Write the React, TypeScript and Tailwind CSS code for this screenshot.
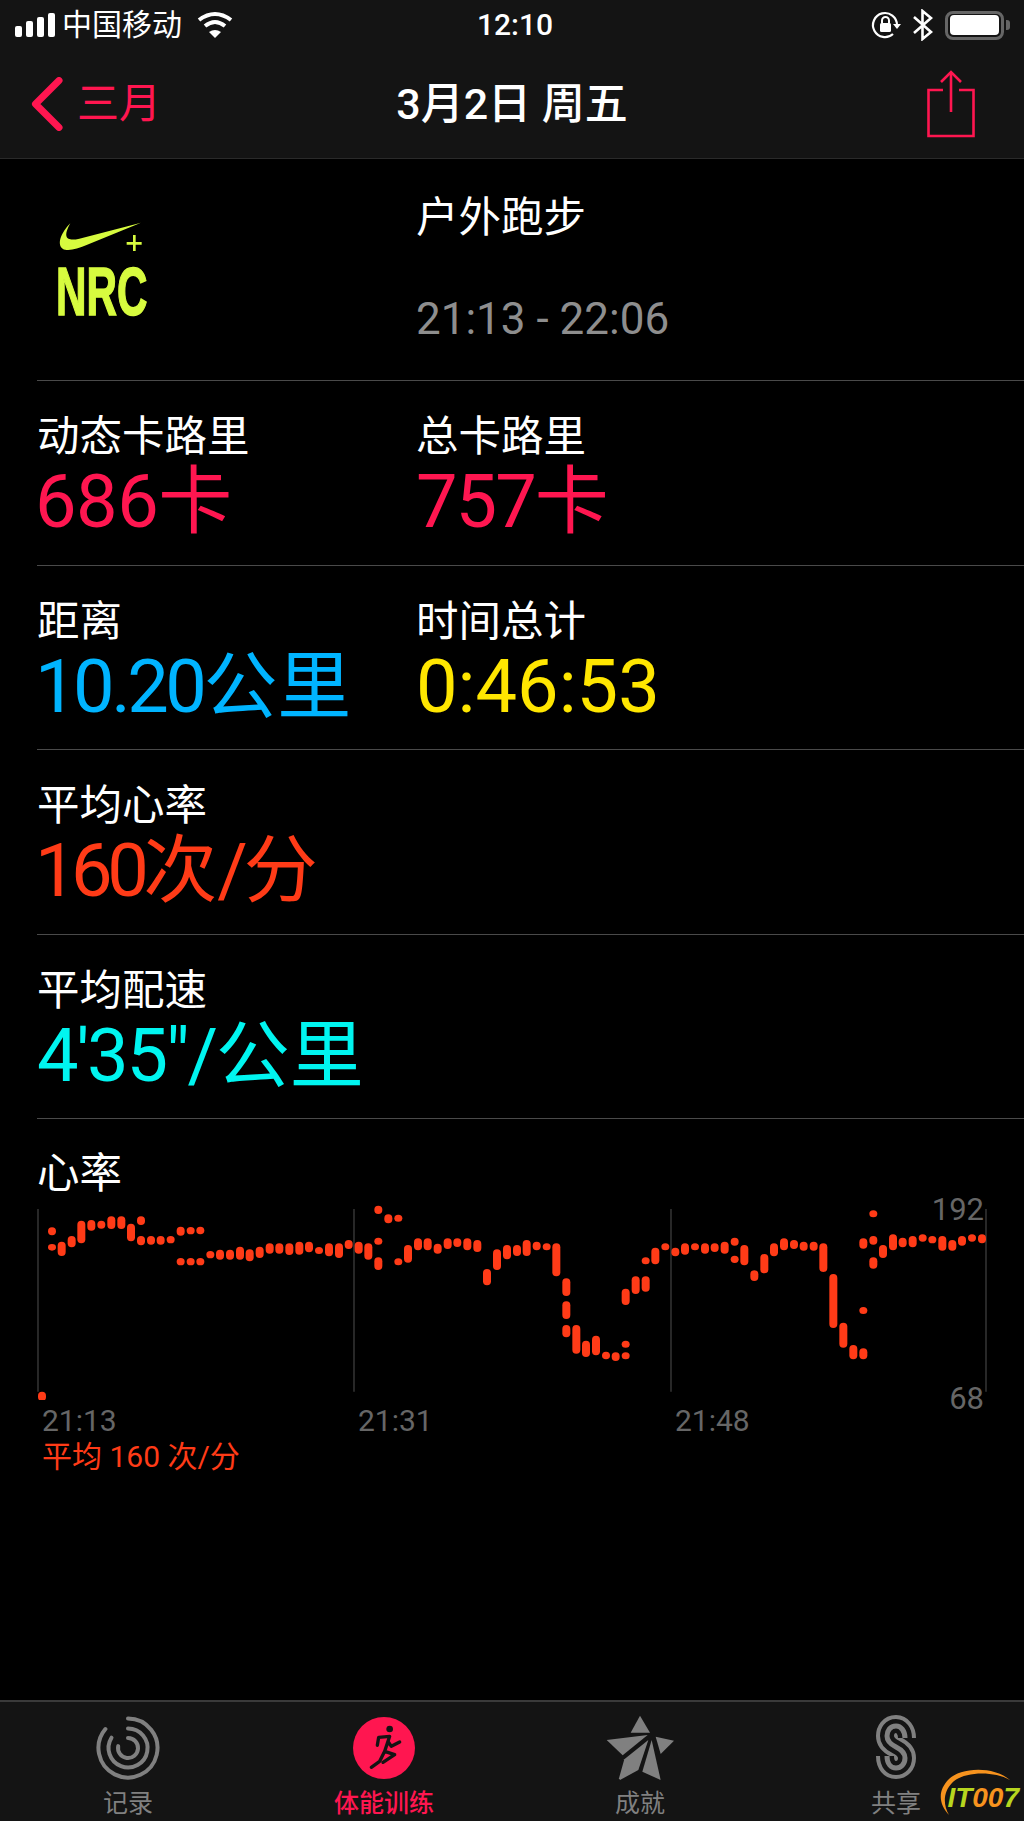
import React from 'react';

// pills of the heart-rate chart as [x, top, bottom], in 3x chart units
const first: number[][] = [
    [66, 605, 633], [96, 112, 136], [96, 162, 182], [125, 155, 198], [155, 138, 172], [184, 92, 160], [214, 90, 122],
    [244, 92, 116], [274, 79, 117], [304, 79, 117], [333, 101, 154], [363, 79, 105], [363, 138, 166], [393, 138, 164],
    [422, 138, 164], [452, 138, 160], [482, 110, 137], [482, 204, 226], [512, 111, 133], [512, 204, 226], [541, 110, 133],
    [541, 204, 226], [571, 183, 205], [600, 179, 209], [630, 179, 209], [660, 170, 209], [689, 178, 214], [719, 170, 204],
    [749, 160, 191], [778, 160, 191], [808, 160, 195], [838, 155, 194], [867, 155, 187], [897, 171, 192], [927, 160, 199],
    [957, 160, 204], [986, 150, 177], [1016, 155, 191],
];
const second: number[][] = [
    [85, 160, 209], [115, 47, 72], [115, 143, 164], [115, 202, 240], [145, 73, 100], [175, 74, 95], [175, 205, 226],
    [204, 165, 218], [234, 145, 181], [263, 145, 181], [293, 161, 191], [323, 145, 177], [352, 145, 171], [382, 145, 181],
    [412, 150, 186], [441, 237, 286], [471, 178, 240], [501, 165, 208], [531, 165, 198], [560, 150, 198], [590, 155, 181],
    [620, 160, 181], [649, 160, 259], [679, 265, 318], [679, 334, 387], [679, 405, 442], [709, 405, 491], [738, 452, 501],
    [768, 437, 496], [798, 485, 508], [827, 487, 513], [857, 296, 345], [857, 452, 473], [857, 487, 508], [887, 259, 312],
    [917, 202, 223], [917, 259, 305], [946, 173, 223], [976, 160, 181], [1006, 173, 199],
];
const third: number[][] = [
    [75, 160, 194], [105, 160, 181], [135, 160, 191], [164, 160, 186], [194, 155, 191], [224, 143, 167], [224, 197, 219],
    [253, 165, 226], [283, 241, 273], [313, 192, 250], [342, 160, 199], [372, 145, 181], [402, 150, 177], [431, 155, 182],
    [461, 155, 182], [490, 160, 246], [520, 252, 414], [550, 398, 473], [580, 465, 508], [610, 145, 176], [610, 351, 372],
    [610, 475, 508], [640, 61, 82], [640, 138, 164], [640, 202, 236], [669, 165, 204], [699, 133, 181], [728, 143, 172],
    [758, 138, 172], [788, 133, 155], [817, 138, 160], [847, 138, 182], [877, 150, 182], [906, 138, 167], [936, 133, 155],
    [966, 133, 160],
];
const pills = [
    ...first,
    ...second.map(([x, a, b]) => [x + 960, a, b]),
    ...third.map(([x, a, b]) => [x + 1920, a, b]),
];

const sCurve =
    'M905 1737 C905 1730 901 1725 896 1725 C890 1725 887 1730 887 1735 C887 1741 892 1744 896 1746 C900 1748 905 1751 905 1757 C905 1763 901 1767 896 1767 C891 1767 887 1763 887 1755';

function StatusBar() {
    return (
        <div className="flex h-[50px] items-center text-white">
            <div className="flex w-[477px] items-center pl-[15px]">
                <div className="flex h-[24px] items-end gap-[4px]">
                    <div className="h-[11px] w-[7px] rounded-[2px] bg-white" />
                    <div className="h-[16px] w-[7px] rounded-[2px] bg-white" />
                    <div className="h-[20px] w-[7px] rounded-[2px] bg-white" />
                    <div className="h-[24px] w-[7px] rounded-[2px] bg-white" />
                </div>
                <span className="ml-[7px] text-[30px] leading-[50px]">中国移动</span>
                <svg className="ml-[14px]" width="38" height="28" viewBox="0 0 36 28" fill="none" stroke="white" strokeWidth="4">
                    <path d="M2 9 Q18 -3 34 9" />
                    <path d="M8 15 Q18 7 28 15" />
                    <path d="M12 21 Q18 17 24 21 L18 27 Z" fill="white" stroke="none" />
                </svg>
            </div>
            <span className="w-[80px] text-[30px] font-medium leading-[50px]">12:10</span>
            <div className="flex flex-1 items-center pl-[313px]">
                <svg width="32" height="30" viewBox="0 0 32 30" fill="none">
                    <path d="M27 15 A12 12 0 1 0 23 24" stroke="white" strokeWidth="2.2" />
                    <path d="M23 14 H31 L27 19 Z" fill="white" />
                    <rect x="10" y="13" width="11" height="9" rx="1.5" fill="white" />
                    <path d="M12 13 V10.5 A3.5 3.5 0 0 1 19 10.5 V13" stroke="white" strokeWidth="2" />
                </svg>
                <svg className="ml-[10px]" width="22" height="32" viewBox="0 0 22 32" fill="none" stroke="white" strokeWidth="2.6">
                    <path d="M2 8 L19 23 L10.5 30 V2 L19 9 L2 24" />
                </svg>
                <div className="ml-[11px] flex items-center">
                    <div className="flex h-[29px] w-[59px] items-center justify-center rounded-[8px] border-[3px] border-[#666666]">
                        <div className="h-[20px] w-[49px] rounded-[4px] bg-white" />
                    </div>
                    <div className="ml-[2px] h-[10px] w-[4px] rounded-r-[3px] bg-[#666666]" />
                </div>
            </div>
        </div>
    );
}

function NavBar() {
    return (
        <div className="flex h-[109px] items-center border-b border-[#2a2a2a] pb-[1px]">
            <div className="flex w-[200px] items-center pl-[31px] text-[#ff1650]">
                <svg width="32" height="54" viewBox="0 0 32 54" fill="none" stroke="#ff1650" strokeWidth="7" strokeLinecap="round" strokeLinejoin="round">
                    <path d="M28 3.5 L4.5 27 L28 50.5" />
                </svg>
                <span className="ml-[14px] text-[42px] leading-[50px]">三月</span>
            </div>
            <div className="flex-1 text-center text-[43px] font-medium leading-[50px] text-white">3月2日 周五</div>
            <div className="flex w-[200px] justify-end pr-[49px]">
                <svg width="48" height="68" viewBox="0 0 48 68" fill="none" stroke="#ff1650" strokeWidth="2.6">
                    <path d="M16 20 H1.5 V66 H46.5 V20 H32" />
                    <path d="M24 2 V42" />
                    <path d="M14 12 L24 2 L34 12" />
                </svg>
            </div>
        </div>
    );
}

function Stat({ label, children, color }: { label: string; children: React.ReactNode; color: string }) {
    return (
        <div className="w-[379px]">
            <div className="text-[42.5px] leading-[50px] text-white">{label}</div>
            <div className={`mt-[2px] whitespace-nowrap text-[74px] leading-[76px] ${color}`}>{children}</div>
        </div>
    );
}

function StatRow({ children }: { children: React.ReactNode }) {
    return <div className="ml-[37px] flex h-[184.5px] border-b border-[#4a4a4a] pt-[31px]">{children}</div>;
}

function Header() {
    return (
        <div className="ml-[37px] flex h-[222px] border-b border-[#4a4a4a]">
            <div className="w-[379px] pl-[19px] pt-[62px]">
                <svg width="90" height="34" viewBox="110 155 270 102">
                    <path d="M153 162 C125 190 112 225 130 238 C145 248 175 238 200 228 L365 160 L180 208 C150 215 125 212 153 162 Z" fill="#d7fb3f" />
                    <path d="M345 197 V245 M322 222 H367" stroke="#d7fb3f" strokeWidth="8" />
                </svg>
                <div className="mt-[13px] h-[47px] origin-left scale-x-[0.62] font-['Liberation_Sans',sans-serif] text-[68px] font-bold leading-[47px] text-[#d7fb3f] [-webkit-text-stroke:1.5px_#d7fb3f]">NRC</div>
            </div>
            <div className="pt-[34px]">
                <div className="text-[42.5px] leading-[50px] text-white">户外跑步</div>
                <div className="mt-[51px] text-[44px] leading-[50px] text-[#8e8e8e]">21:13 - 22:06</div>
            </div>
        </div>
    );
}

function HeartChart() {
    return (
        <div className="ml-[37px] pt-[30px]">
            <div className="text-[42.5px] leading-[50px] text-white">心率</div>
            <div className="relative -ml-[17px] mt-[1px] h-[200px] w-[990px]">
                <svg width="990" height="200" viewBox="0 30 2970 600">
                    {[54, 1002, 1953, 2898].map((x) => (
                        <line key={x} x1={x} x2={x} y1="57" y2="605" stroke="#3c3c3c" strokeWidth="4" />
                    ))}
                    {pills.map(([x, a, b], i) => (
                        <rect key={i} x={x - 12} y={a} width="24" height={b - a} rx="12" fill="#ff3b17" />
                    ))}
                </svg>
                <span className="absolute right-[26px] top-[-8px] text-[31px] leading-[36px] text-[#666666]">192</span>
                <span className="absolute right-[26px] top-[181px] text-[31px] leading-[36px] text-[#666666]">68</span>
            </div>
            <div className="mt-[3px] flex pl-[5px] text-[30px] leading-[36px] text-[#666666]">
                <span className="w-[316px]">21:13</span>
                <span className="w-[317px]">21:31</span>
                <span>21:48</span>
            </div>
            <div className="pl-[5px] text-[30px] leading-[35px] text-[#ff3b17]">平均 160 次/分</div>
        </div>
    );
}

function TabBar() {
    return (
        <div className="relative grid h-[121px] grid-cols-4 border-t-2 border-[#3a3a3a] bg-[#141414] pt-[13px]">
            <div className="flex flex-col items-center text-[#808080]">
                <svg width="66" height="66" viewBox="-33 -33 66 66" fill="none" stroke="#808080" strokeWidth="4" strokeLinecap="round">
                    <path d="M0 -29.5 A29.5 29.5 0 1 1 -22.6 -19" />
                    <path d="M0 -19.5 A19.5 19.5 0 1 1 -16.5 -10.3" />
                    <path d="M0 -10 A10 10 0 1 1 -9.8 -1.9" />
                </svg>
                <span className="mt-[7px] text-[25px] leading-[32px]">记录</span>
            </div>
            <div className="flex flex-col items-center text-[#ff1650]">
                <svg width="66" height="66" viewBox="1054 71 198 198" fill="none">
                    <circle cx="1153" cy="170" r="93" fill="#ff1650" />
                    <circle cx="1170" cy="113" r="10" fill="#141414" />
                    <path d="M1133 162 L1137 138 L1170 135 L1155 180 L1185 190 L1150 213 M1155 180 L1140 210 L1115 228 M1165 150 L1175 165 L1200 152" stroke="#141414" strokeWidth="10" strokeLinecap="round" strokeLinejoin="round" />
                </svg>
                <span className="mt-[7px] text-[25px] font-medium leading-[32px]">体能训练</span>
            </div>
            <div className="flex flex-col items-center text-[#808080]">
                <svg className="overflow-visible" width="66" height="66" viewBox="286 75 198 198" fill="#808080">
                    <polygon points="385,77 415,128 357,128" />
                    <polygon points="285,150 408,135 333,196" />
                    <polygon points="410,150 380,240 325,270 322,265 338,208" />
                    <polygon points="420,150 447,270 392,245" />
                    <polygon points="432,140 487,152 447,192" />
                </svg>
                <span className="mt-[7px] text-[25px] leading-[32px]">成就</span>
            </div>
            <div className="flex flex-col items-center text-[#808080]">
                <svg width="66" height="66" viewBox="863 1714 66 66" fill="none">
                    <path d={sCurve} stroke="#808080" strokeWidth="22" />
                    <path d={sCurve} stroke="#141414" strokeWidth="14" />
                    <path d={sCurve} stroke="#808080" strokeWidth="5" />
                </svg>
                <span className="mt-[7px] text-[25px] leading-[32px]">共享</span>
            </div>
            {/* watermark */}
            <svg className="absolute bottom-0 right-0" width="90" height="60" viewBox="934 1761 90 60">
                <path d="M949 1815 C938 1803 938 1790 949 1779 C960 1768 992 1765 1010 1780 C992 1770 962 1772 952 1783 C943 1792 943 1805 949 1815 Z" fill="#f7931e" />
            </svg>
            <div className="absolute bottom-[7px] right-[5px] font-['Liberation_Sans',sans-serif] text-[28px] font-bold italic leading-[32px] text-[#b7d61f]">
                IT<span className="text-[#f7931e]">00</span>7
            </div>
        </div>
    );
}

export default function App() {
    return (
        <div className="flex h-[1821px] w-[1024px] flex-col overflow-hidden bg-black font-['Roboto','Noto_Sans_CJK_SC',sans-serif]">
            <div className="bg-[#141414]">
                <StatusBar />
                <NavBar />
            </div>
            <main className="flex-1">
                <Header />
                <StatRow>
                    <Stat label="动态卡路里" color="text-[#ff1650]">
                        <span className="-ml-[2px] tracking-[-0.5px]">686</span>卡
                    </Stat>
                    <Stat label="总卡路里" color="text-[#ff1650]">
                        <span className="tracking-[-2px]">757</span>卡
                    </Stat>
                </StatRow>
                <StatRow>
                    <Stat label="距离" color="text-[#00b4ff]">
                        <span className="-ml-[2px] tracking-[-3.5px]">10.20</span>公里
                    </Stat>
                    <Stat label="时间总计" color="text-[#ffe600]">0:46:53</Stat>
                </StatRow>
                <StatRow>
                    <Stat label="平均心率" color="text-[#ff3b17]">
                        <span className="-ml-[2px] tracking-[-5.5px]">160</span>次<span className="tracking-[-4px]">/</span>分
                    </Stat>
                </StatRow>
                <StatRow>
                    <Stat label="平均配速" color="text-[#00f5f0]">
                        <span className="tracking-[-2.2px]">{`4'35"/`}</span>公里
                    </Stat>
                </StatRow>
                <HeartChart />
            </main>
            <TabBar />
        </div>
    );
}
